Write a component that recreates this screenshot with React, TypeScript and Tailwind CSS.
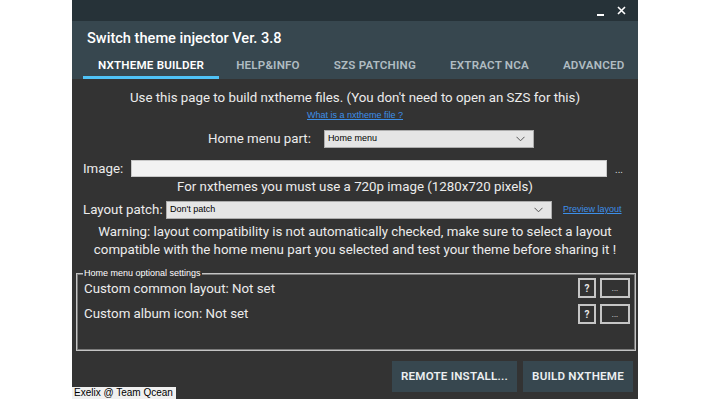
import React from "react";

const roboto = { fontFamily: "Roboto, 'Noto Sans', sans-serif" };
const ms = { fontFamily: "'Liberation Sans', Arial, sans-serif" };

function Chevron() {
  return (
    <svg width="9" height="6" viewBox="0 0 9 6" className="shrink-0">
      <path d="M0.5 0.8 L4.5 4.8 L8.5 0.8" fill="none" stroke="#555" strokeWidth="1" />
    </svg>
  );
}

function Combo({ text, w }: { text: string; w: string }) {
  return (
    <div
      className={`${w} h-[18px] bg-[#e5e5e5] border border-[#adadad] flex items-center justify-between pl-[3px] pr-[8px] text-[9px] text-black`}
      style={ms}
    >
      <span>{text}</span>
      <Chevron />
    </div>
  );
}

function SmallBtn({ children, w }: { children: React.ReactNode; w: string }) {
  return (
    <div
      className={`${w} h-[20px] border-2 border-[#c6c6c6] bg-[#333333] flex items-center justify-center text-[#e8e8e8]`}
    >
      {children}
    </div>
  );
}

export default function App() {
  const tabs = ["NXTHEME BUILDER", "HELP&INFO", "SZS PATCHING", "EXTRACT NCA", "ADVANCED"];
  return (
    <div className="w-[710px] h-[399px] bg-white flex overflow-hidden">
      <div className="ml-[72px] w-[566px] h-[399px] bg-[#333333] flex flex-col" style={roboto}>
        {/* title bar */}
        <div className="h-[21px] bg-[#263238] flex items-center justify-end pr-[12px] gap-[13px] text-white">
          <div className="w-[7px] h-[2px] bg-white mt-[8px]" />
          <svg width="9" height="9" viewBox="0 0 9 9">
            <path d="M1 1 L8 8 M8 1 L1 8" stroke="white" strokeWidth="1.6" />
          </svg>
        </div>
        {/* header */}
        <div className="h-[58px] bg-[#37474f] flex flex-col">
          <div className="pl-[15px] pt-[8px] text-[14.6px] font-medium text-white leading-[18px]">
            Switch theme injector Ver. 3.8
          </div>
          <div className="flex pl-[11px] mt-auto">
            {tabs.map((t, i) => (
              <div
                key={t}
                className={`h-[25px] flex items-start pt-[3px] text-[11.6px] font-semibold tracking-[0.2px] whitespace-nowrap ${
                  i === 0
                    ? "px-[15px] text-white border-b-[3px] border-[#4fc3f7]"
                    : "px-[17px] text-[#b0bcc2] border-b-[3px] border-transparent"
                }`}
              >
                {t}
              </div>
            ))}
          </div>
        </div>
        {/* content */}
        <div className="flex-1 flex flex-col text-[#ececec] text-[13.3px]">
          <div className="mt-[9px] h-[20px] flex items-center justify-center">
            Use this page to build nxtheme files. (You don't need to open an SZS for this)
          </div>
          <div
            className="mt-[2px] h-[12px] flex items-center justify-center text-[9px] text-[#3d8fe8] underline"
            style={ms}
          >
            What is a nxtheme file ?
          </div>
          <div className="mt-[8px] h-[18px] flex items-center pl-[136px] gap-[13px]">
            <span>Home menu part:</span>
            <Combo text="Home menu" w="w-[210px]" />
          </div>
          <div className="mt-[12px] h-[17px] flex items-center pl-[11px]">
            <span className="w-[48px]">Image:</span>
            <div className="w-[476px] h-[17px] bg-[#f2f2f2] border border-[#c8c8c8]" />
            <span className="ml-[8px] text-[10px] text-[#dcdcdc] leading-none mt-[2px]">...</span>
          </div>
          <div className="mt-[1px] h-[18px] flex items-center justify-center">
            For nxthemes you must use a 720p image (1280x720 pixels)
          </div>
          <div className="mt-[5px] h-[18px] flex items-center pl-[11px]">
            <span className="w-[83px] whitespace-nowrap">Layout patch:</span>
            <Combo text="Don't patch" w="w-[386px]" />
            <span className="ml-[11px] text-[9px] text-[#3d8fe8] underline" style={ms}>
              Preview layout
            </span>
          </div>
          <div className="mt-[4px] leading-[18px] text-center whitespace-nowrap">
            Warning: layout compatibility is not automatically checked, make sure to select a layout
            <br />
            compatible with the home menu part you selected and test your theme before sharing it !
          </div>
          {/* group box */}
          <div className="mt-[14px] ml-[4px] w-[560px] h-[78px] relative border border-[#c4c4c4] shadow-[inset_1px_1px_0_#7a7a7a,inset_-1px_-1px_0_#7a7a7a] flex flex-col pl-[7px] pr-[5px]">
            <span
              className="absolute left-[6px] top-[-7px] px-[1px] bg-[#333333] text-[9px] leading-[12px] text-white whitespace-nowrap"
              style={ms}
            >
              Home menu optional settings
            </span>
            <div className="mt-[4px] h-[20px] flex items-center">
              <span className="flex-1 mt-[2px]">Custom common layout: Not set</span>
              <SmallBtn w="w-[18px]">
                <span className="text-[10px] font-bold">?</span>
              </SmallBtn>
              <div className="w-[4px]" />
              <SmallBtn w="w-[30px]">
                <span className="text-[8px] leading-none mt-[2px]">...</span>
              </SmallBtn>
            </div>
            <div className="mt-[6px] h-[20px] flex items-center">
              <span className="flex-1">Custom album icon: Not set</span>
              <SmallBtn w="w-[18px]">
                <span className="text-[10px] font-bold">?</span>
              </SmallBtn>
              <div className="w-[4px]" />
              <SmallBtn w="w-[30px]">
                <span className="text-[8px] leading-none mt-[2px]">...</span>
              </SmallBtn>
            </div>
          </div>
          {/* bottom */}
          <div className="flex-1 flex items-start">
            <div
              className="self-end h-[12px] bg-[#f0f0f0] text-black text-[10px] leading-[12px] pl-[2px] pr-[3px] whitespace-nowrap"
              style={ms}
            >
              Exelix @ Team Qcean
            </div>
            <div className="ml-auto mr-[5px] mt-[10px] flex gap-[6px]">
              <div className="w-[125px] h-[31px] bg-[#37474f] flex items-center justify-center text-[11.6px] font-semibold text-[#eceff1] tracking-[0.2px] whitespace-nowrap">
                REMOTE INSTALL...
              </div>
              <div className="w-[110px] h-[31px] bg-[#37474f] flex items-center justify-center text-[11.6px] font-semibold text-[#eceff1] tracking-[0.2px] whitespace-nowrap">
                BUILD NXTHEME
              </div>
            </div>
          </div>
        </div>
      </div>
    </div>
  );
}
